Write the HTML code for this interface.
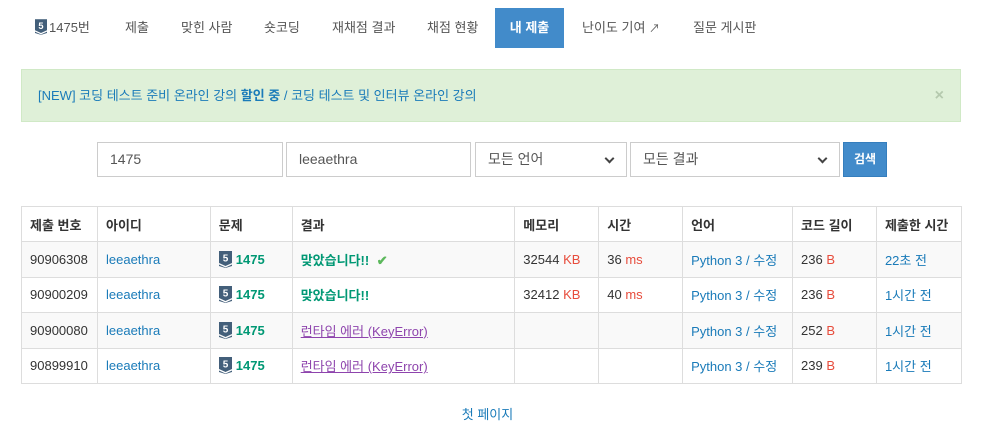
<!DOCTYPE html>
<html><head><meta charset="utf-8"><style>
*{box-sizing:border-box;margin:0;padding:0}
body{width:990px;height:434px;background:#fff;font-family:"Liberation Sans","Noto Sans CJK KR",sans-serif;font-size:13px;color:#333;position:relative;overflow:hidden}
.a{position:absolute}
.nav a{position:absolute;top:8px;height:40px;line-height:40px;color:#555;font-size:13px;text-decoration:none;white-space:nowrap}
.nav .act{background:#428bca;color:#fff;font-weight:bold;text-align:center}
.badge{display:inline-block;vertical-align:-4px;width:13px;height:17px;position:relative;margin-right:4px}
.alert{left:21px;top:69px;width:940px;height:53px;background:#dff0d8;border:1px solid #d0e9c6;color:#1a7bb9;font-size:13px;line-height:51px;padding-left:16px}
.inp{top:142px;height:35px;border:1px solid #ccc;font-size:14px;line-height:33px;padding-left:12px;color:#555}
.sel::after{content:"";position:absolute;right:13px;top:12px;width:5px;height:5px;border-right:2px solid #444;border-bottom:2px solid #444;transform:rotate(45deg)}
table{position:absolute;left:21px;top:206px;width:941px;border-collapse:collapse;font-size:13px}
td,th{border:1px solid #ddd;padding:0 8px;text-align:left;height:35.5px;white-space:nowrap}
th{font-weight:bold;height:35px}
tr.s td{background:#f9f9f9}
.b{color:#1a7bb9}.r{color:#e74c3c}.g{color:#009874;font-weight:bold}.e{color:#8e44ad;text-decoration:underline;text-decoration-color:#8e44ad}
</style></head><body>
<svg width="0" height="0" style="position:absolute"><defs><symbol id="t5" viewBox="0 0 13 17"><path d="M0 0h13v12l-6.5 3L0 12z" fill="#435f7a"/><path d="M0 13.5l6.5 3 6.5-3v1.5l-6.5 2L0 15z" fill="#435f7a"/><text x="6.5" y="10.5" font-size="10" font-weight="bold" fill="#fff" text-anchor="middle" font-family="Liberation Sans">5</text></symbol></defs></svg>
<div class="nav">
<a style="left:35px"><svg class="badge" viewBox="0 0 13 17" style="width:12px;height:16px;margin-right:2px;vertical-align:-3px"><use href="#t5"/></svg>1475번</a>
<a style="left:125px">제출</a>
<a style="left:181px">맞힌 사람</a>
<a style="left:264px">숏코딩</a>
<a style="left:332px">재채점 결과</a>
<a style="left:427px">채점 현황</a>
<a class="act" style="left:495px;width:69px">내 제출</a>
<a style="left:582px">난이도 기여 <span style="font-size:11px">&#x2197;</span></a>
<a style="left:693px">질문 게시판</a>
</div>
<div class="a alert">[NEW] 코딩 테스트 준비 온라인 강의 <b>할인 중</b> / 코딩 테스트 및 인터뷰 온라인 강의<span style="position:absolute;right:16px;top:0;color:#b5c9ae;font-weight:bold;font-size:16px">×</span></div>
<div class="a inp" style="left:97px;width:186px">1475</div>
<div class="a inp" style="left:286px;width:185px">leeaethra</div>
<div class="a inp sel" style="left:475px;width:152px">모든 언어</div>
<div class="a inp sel" style="left:630px;width:210px">모든 결과</div>
<div class="a" style="left:843px;top:142px;width:44px;height:35px;background:#428bca;border:1px solid #357ebd;color:#fff;font-weight:bold;font-size:12px;text-align:center;line-height:33px">검색</div>
<table>
<colgroup><col style="width:76px"><col style="width:113px"><col style="width:82px"><col style="width:223px"><col style="width:84px"><col style="width:84px"><col style="width:110px"><col style="width:84px"><col style="width:85px"></colgroup>
<tr><th>제출 번호</th><th>아이디</th><th>문제</th><th>결과</th><th>메모리</th><th>시간</th><th>언어</th><th>코드 길이</th><th>제출한 시간</th></tr>
<tr class="s"><td>90906308</td><td class="b">leeaethra</td><td><svg class="badge" viewBox="0 0 13 17"><use href="#t5"/></svg><span class="g">1475</span></td><td><span class="g">맞았습니다!!</span> <span style="color:#5cb85c;font-weight:bold;margin-left:4px">✔</span></td><td>32544 <span class="r">KB</span></td><td>36 <span class="r">ms</span></td><td class="b">Python 3 / 수정</td><td>236 <span class="r">B</span></td><td class="b">22초 전</td></tr>
<tr><td>90900209</td><td class="b">leeaethra</td><td><svg class="badge" viewBox="0 0 13 17"><use href="#t5"/></svg><span class="g">1475</span></td><td><span class="g">맞았습니다!!</span></td><td>32412 <span class="r">KB</span></td><td>40 <span class="r">ms</span></td><td class="b">Python 3 / 수정</td><td>236 <span class="r">B</span></td><td class="b">1시간 전</td></tr>
<tr class="s"><td>90900080</td><td class="b">leeaethra</td><td><svg class="badge" viewBox="0 0 13 17"><use href="#t5"/></svg><span class="g">1475</span></td><td><span class="e">런타임 에러 (KeyError)</span></td><td></td><td></td><td class="b">Python 3 / 수정</td><td>252 <span class="r">B</span></td><td class="b">1시간 전</td></tr>
<tr><td>90899910</td><td class="b">leeaethra</td><td><svg class="badge" viewBox="0 0 13 17"><use href="#t5"/></svg><span class="g">1475</span></td><td><span class="e">런타임 에러 (KeyError)</span></td><td></td><td></td><td class="b">Python 3 / 수정</td><td>239 <span class="r">B</span></td><td class="b">1시간 전</td></tr>
</table>
<div class="a b" style="left:0;width:975px;top:404px;text-align:center;font-size:13px">첫 페이지</div>
</body></html>
